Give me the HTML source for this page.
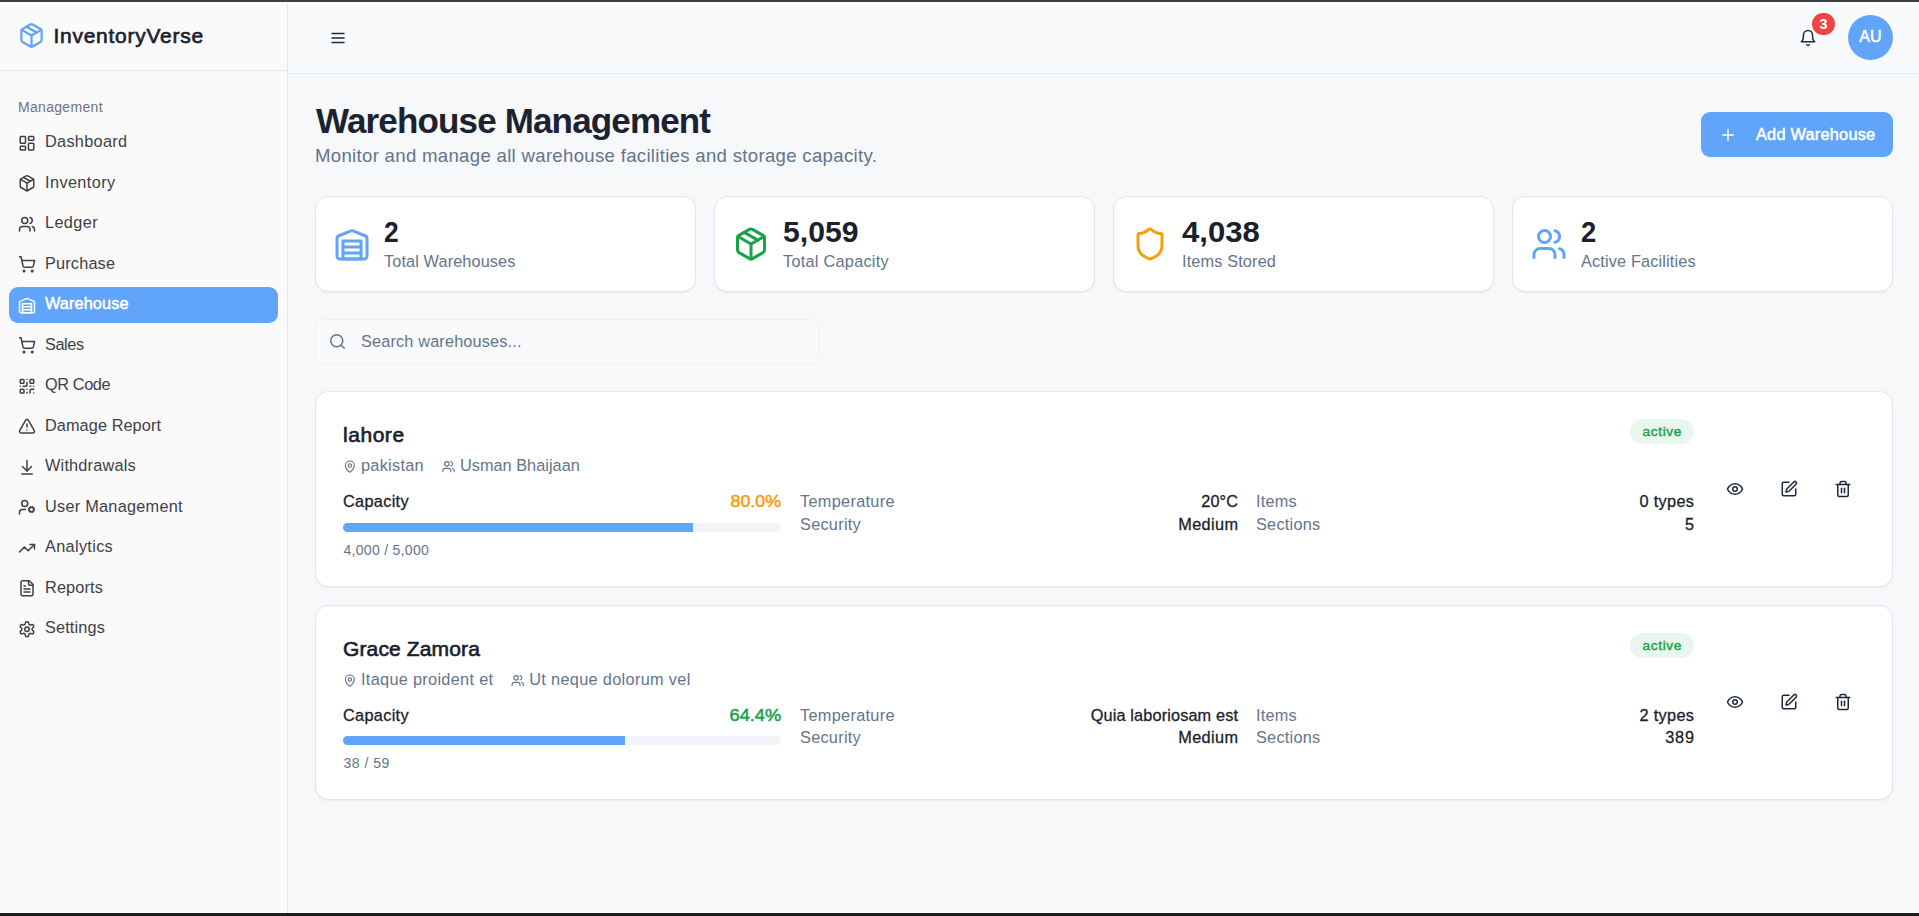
<!DOCTYPE html>
<html lang="en">
<head>
<meta charset="utf-8">
<title>InventoryVerse - Warehouse Management</title>
<style>
*{box-sizing:border-box;margin:0;padding:0}
html,body{width:1919px;height:916px;overflow:hidden;background:#fff}
body{font-family:"Liberation Sans",sans-serif;position:relative}
svg{display:block;fill:none;stroke:currentColor;stroke-linecap:round;stroke-linejoin:round}
.t{position:absolute;white-space:nowrap;font-weight:400;font-style:normal}
</style>
</head>
<body>
<div style="position:absolute;left:0;top:0;width:1919px;height:2px;background:#3f4040"></div>
<div style="position:absolute;left:0;top:913px;width:1919px;height:3px;background:#1c1c1c"></div>
<div style="position:absolute;left:0;top:3px;width:287px;height:909px;background:#fafafa"></div>
<div style="position:absolute;left:287px;top:3px;width:1px;height:910px;background:#dfe7f1"></div>
<div style="position:absolute;left:0;top:70px;width:287px;height:1px;background:#dfe7f1"></div>
<svg viewBox="0 0 24 24" style="position:absolute;left:18px;top:22px;width:27px;height:27px;color:#60a5fa;stroke-width:2"><path d="m7.5 4.27 9 5.15"/><path d="M21 8a2 2 0 0 0-1-1.73l-7-4a2 2 0 0 0-2 0l-7 4A2 2 0 0 0 3 8v8a2 2 0 0 0 1 1.73l7 4a2 2 0 0 0 2 0l7-4A2 2 0 0 0 21 16Z"/><path d="m3.3 7 8.7 5 8.7-5"/><path d="M12 22V12"/></svg>
<span class="t" id="brand" style="top:22px;font-size:21.0px;line-height:27px;color:#1a202c;left:53.5px;-webkit-text-stroke:0.63px currentColor;letter-spacing:0.731px;">InventoryVerse</span>
<span class="t" id="mgmt" style="top:97px;font-size:14.0px;line-height:20px;color:#71717a;left:18px;letter-spacing:0.311px;">Management</span>
<svg viewBox="0.000 -0.267 26.667 26.667" style="position:absolute;left:18px;top:134px;width:20px;height:20px;color:#3f3f46;stroke-width:2"><rect width="7" height="9" x="3" y="3" rx="1"/><rect width="7" height="5" x="14" y="3" rx="1"/><rect width="7" height="9" x="14" y="12" rx="1"/><rect width="7" height="5" x="3" y="16" rx="1"/></svg>
<span class="t" id="nav0" style="top:130px;font-size:16.3px;line-height:22px;color:#3f3f46;left:45px;letter-spacing:0.300px;">Dashboard</span>
<svg viewBox="0.000 -0.267 26.667 26.667" style="position:absolute;left:18px;top:174px;width:20px;height:20px;color:#3f3f46;stroke-width:2"><path d="m7.5 4.27 9 5.15"/><path d="M21 8a2 2 0 0 0-1-1.73l-7-4a2 2 0 0 0-2 0l-7 4A2 2 0 0 0 3 8v8a2 2 0 0 0 1 1.73l7 4a2 2 0 0 0 2 0l7-4A2 2 0 0 0 21 16Z"/><path d="m3.3 7 8.7 5 8.7-5"/><path d="M12 22V12"/></svg>
<span class="t" id="nav1" style="top:171px;font-size:16.3px;line-height:22px;color:#3f3f46;left:45px;letter-spacing:0.400px;">Inventory</span>
<svg viewBox="0.000 -0.267 26.667 26.667" style="position:absolute;left:18px;top:215px;width:20px;height:20px;color:#3f3f46;stroke-width:2"><path d="M16 21v-2a4 4 0 0 0-4-4H6a4 4 0 0 0-4 4v2"/><circle cx="9" cy="7" r="4"/><path d="M22 21v-2a4 4 0 0 0-3-3.87"/><path d="M16 3.13a4 4 0 0 1 0 7.75"/></svg>
<span class="t" id="nav2" style="top:211px;font-size:16.3px;line-height:22px;color:#3f3f46;left:45px;letter-spacing:0.380px;">Ledger</span>
<svg viewBox="0.000 -0.267 26.667 26.667" style="position:absolute;left:18px;top:255px;width:20px;height:20px;color:#3f3f46;stroke-width:2"><circle cx="8" cy="21" r="1"/><circle cx="19" cy="21" r="1"/><path d="M2.05 2.05h2l2.66 12.42a2 2 0 0 0 2 1.58h9.78a2 2 0 0 0 1.95-1.57l1.65-7.43H5.12"/></svg>
<span class="t" id="nav3" style="top:252px;font-size:16.3px;line-height:22px;color:#3f3f46;left:45px;letter-spacing:0.171px;">Purchase</span>
<div style="position:absolute;left:9px;top:287.0px;width:269px;height:36px;border-radius:9px;background:#60a5fa"></div>
<svg viewBox="0.000 -0.267 26.667 26.667" style="position:absolute;left:18px;top:296px;width:20px;height:20px;color:#ffffff;stroke-width:2"><path d="M22 8.35V20a2 2 0 0 1-2 2H4a2 2 0 0 1-2-2V8.35A2 2 0 0 1 3.26 6.5l8-3.2a2 2 0 0 1 1.48 0l8 3.2A2 2 0 0 1 22 8.35Z"/><path d="M6 18h12"/><path d="M6 14h12"/><rect width="12" height="12" x="6" y="10"/></svg>
<span class="t" id="nav4" style="top:292px;font-size:16.3px;line-height:22px;color:#ffffff;left:45px;-webkit-text-stroke:0.49px currentColor;letter-spacing:0.100px;">Warehouse</span>
<svg viewBox="0.000 -0.267 26.667 26.667" style="position:absolute;left:18px;top:336px;width:20px;height:20px;color:#3f3f46;stroke-width:2"><circle cx="8" cy="21" r="1"/><circle cx="19" cy="21" r="1"/><path d="M2.05 2.05h2l2.66 12.42a2 2 0 0 0 2 1.58h9.78a2 2 0 0 0 1.95-1.57l1.65-7.43H5.12"/></svg>
<span class="t" id="nav5" style="top:333px;font-size:16.3px;line-height:22px;color:#3f3f46;left:45px;letter-spacing:-0.400px;">Sales</span>
<svg viewBox="0.000 -0.267 26.667 26.667" style="position:absolute;left:18px;top:377px;width:20px;height:20px;color:#3f3f46;stroke-width:2"><rect width="5" height="5" x="3" y="3" rx="1"/><rect width="5" height="5" x="16" y="3" rx="1"/><rect width="5" height="5" x="3" y="16" rx="1"/><path d="M21 16h-3a2 2 0 0 0-2 2v3"/><path d="M21 21v.01"/><path d="M12 7v3a2 2 0 0 1-2 2H7"/><path d="M3 12h.01"/><path d="M12 3h.01"/><path d="M12 16v.01"/><path d="M16 12h1"/><path d="M21 12v.01"/><path d="M12 21v-1"/></svg>
<span class="t" id="nav6" style="top:373px;font-size:16.3px;line-height:22px;color:#3f3f46;left:45px;letter-spacing:-0.383px;">QR Code</span>
<svg viewBox="0.000 -0.267 26.667 26.667" style="position:absolute;left:18px;top:417px;width:20px;height:20px;color:#3f3f46;stroke-width:2"><path d="m21.73 18-8-14a2 2 0 0 0-3.48 0l-8 14A2 2 0 0 0 4 21h16a2 2 0 0 0 1.73-3Z"/><path d="M12 9v4"/><path d="M12 17h.01"/></svg>
<span class="t" id="nav7" style="top:414px;font-size:16.3px;line-height:22px;color:#3f3f46;left:45px;letter-spacing:0.083px;">Damage Report</span>
<svg viewBox="0.000 -0.267 26.667 26.667" style="position:absolute;left:18px;top:458px;width:20px;height:20px;color:#3f3f46;stroke-width:2"><path d="M12 17V3"/><path d="m6 11 6 6 6-6"/><path d="M19 21H5"/></svg>
<span class="t" id="nav8" style="top:454px;font-size:16.3px;line-height:22px;color:#3f3f46;left:45px;letter-spacing:0.200px;">Withdrawals</span>
<svg viewBox="0.000 -0.267 26.667 26.667" style="position:absolute;left:18px;top:498px;width:20px;height:20px;color:#3f3f46;stroke-width:2"><circle cx="18" cy="15" r="3"/><circle cx="9" cy="7" r="4"/><path d="M10 15H6a4 4 0 0 0-4 4v2"/><path d="m21.7 16.4-.9-.3"/><path d="m15.2 13.9-.9-.3"/><path d="m16.6 18.7.3-.9"/><path d="m19.1 12.2.3-.9"/><path d="m19.6 18.7-.4-1"/><path d="m16.8 12.3-.4-1"/><path d="m14.3 16.6 1-.4"/><path d="m20.7 13.8 1-.4"/></svg>
<span class="t" id="nav9" style="top:495px;font-size:16.3px;line-height:22px;color:#3f3f46;left:45px;letter-spacing:0.257px;">User Management</span>
<svg viewBox="0.000 -0.267 26.667 26.667" style="position:absolute;left:18px;top:539px;width:20px;height:20px;color:#3f3f46;stroke-width:2"><polyline points="22 7 13.5 15.5 8.5 10.5 2 17"/><polyline points="16 7 22 7 22 13"/></svg>
<span class="t" id="nav10" style="top:535px;font-size:16.3px;line-height:22px;color:#3f3f46;left:45px;letter-spacing:0.325px;">Analytics</span>
<svg viewBox="0.000 -0.267 26.667 26.667" style="position:absolute;left:18px;top:579px;width:20px;height:20px;color:#3f3f46;stroke-width:2"><path d="M15 2H6a2 2 0 0 0-2 2v16a2 2 0 0 0 2 2h12a2 2 0 0 0 2-2V7Z"/><path d="M14 2v4a2 2 0 0 0 2 2h4"/><path d="M10 9H8"/><path d="M16 13H8"/><path d="M16 17H8"/></svg>
<span class="t" id="nav11" style="top:576px;font-size:16.3px;line-height:22px;color:#3f3f46;left:45px;letter-spacing:0.133px;">Reports</span>
<svg viewBox="0.000 -0.267 26.667 26.667" style="position:absolute;left:18px;top:620px;width:20px;height:20px;color:#3f3f46;stroke-width:2"><path d="M12.22 2h-.44a2 2 0 0 0-2 2v.18a2 2 0 0 1-1 1.73l-.43.25a2 2 0 0 1-2 0l-.15-.08a2 2 0 0 0-2.73.73l-.22.38a2 2 0 0 0 .73 2.73l.15.1a2 2 0 0 1 1 1.72v.51a2 2 0 0 1-1 1.74l-.15.09a2 2 0 0 0-.73 2.73l.22.38a2 2 0 0 0 2.73.73l.15-.08a2 2 0 0 1 2 0l.43.25a2 2 0 0 1 1 1.73V20a2 2 0 0 0 2 2h.44a2 2 0 0 0 2-2v-.18a2 2 0 0 1 1-1.73l.43-.25a2 2 0 0 1 2 0l.15.08a2 2 0 0 0 2.73-.73l.22-.39a2 2 0 0 0-.73-2.73l-.15-.08a2 2 0 0 1-1-1.74v-.5a2 2 0 0 1 1-1.74l.15-.09a2 2 0 0 0 .73-2.73l-.22-.38a2 2 0 0 0-2.73-.73l-.15.08a2 2 0 0 1-2 0l-.43-.25a2 2 0 0 1-1-1.73V4a2 2 0 0 0-2-2z"/><circle cx="12" cy="12" r="3"/></svg>
<span class="t" id="nav12" style="top:616px;font-size:16.3px;line-height:22px;color:#3f3f46;left:45px;letter-spacing:0.143px;">Settings</span>
<div style="position:absolute;left:288px;top:3px;width:1631px;height:909px;background:#f6f8fa"></div>
<div style="position:absolute;left:288px;top:3px;width:1631px;height:70px;background:#f9fafb"></div>
<div style="position:absolute;left:288px;top:73px;width:1631px;height:1px;background:#dfe7f1"></div>
<svg viewBox="0 0 24 24" style="position:absolute;left:329px;top:29px;width:18px;height:18px;color:#1e293b;stroke-width:2"><line x1="4" x2="20" y1="12" y2="12"/><line x1="4" x2="20" y1="6" y2="6"/><line x1="4" x2="20" y1="18" y2="18"/></svg>
<svg viewBox="0 0 24 24" style="position:absolute;left:1799px;top:29px;width:18px;height:18px;color:#1e293b;stroke-width:2"><path d="M6 8a6 6 0 0 1 12 0c0 7 3 9 3 9H3s3-2 3-9"/><path d="M10.3 21a1.94 1.94 0 0 0 3.4 0"/></svg>
<div style="position:absolute;left:1812.25px;top:12.75px;width:22.5px;height:22.5px;border-radius:50%;background:#ef4444"></div>
<span class="t" id="bnum" style="top:14px;font-size:14.4px;line-height:20px;color:#ffffff;left:1823.5px;transform:translateX(-50%);font-weight:700;">3</span>
<div style="position:absolute;left:1848px;top:15px;width:45px;height:45px;border-radius:50%;background:#60a5fa"></div>
<span class="t" id="au" style="top:26px;font-size:16.0px;line-height:21px;color:#ffffff;left:1870.4px;transform:translateX(-50%);-webkit-text-stroke:0.48px currentColor;">AU</span>
<h1 class="t" id="title" style="top:99px;font-size:35.0px;line-height:43px;color:#1c2230;left:316px;font-weight:700;letter-spacing:-0.842px;">Warehouse Management</h1>
<p class="t" id="sub" style="top:143px;font-size:18.6px;line-height:25px;color:#64748b;left:315px;letter-spacing:0.305px;">Monitor and manage all warehouse facilities and storage capacity.</p>
<div style="position:absolute;left:1701px;top:112px;width:192px;height:45px;border-radius:9px;background:#60a5fa"></div>
<svg viewBox="0 0 24 24" style="position:absolute;left:1719px;top:126px;width:18px;height:18px;color:#ffffff;stroke-width:2"><path d="M5 12h14"/><path d="M12 5v14"/></svg>
<span class="t" id="addw" style="top:123px;font-size:16.3px;line-height:22px;color:#ffffff;left:1756px;-webkit-text-stroke:0.49px currentColor;letter-spacing:0.250px;">Add Warehouse</span>
<div style="position:absolute;left:315px;top:196px;width:381px;height:96px;background:#fff;border:1px solid #dfe7f1;border-radius:13.5px;box-shadow:0 1px 2px rgba(15,23,42,.06)"></div>
<svg viewBox="0 0 24 24" style="position:absolute;left:334px;top:226px;width:36px;height:36px;color:#60a5fa;stroke-width:2"><path d="M22 8.35V20a2 2 0 0 1-2 2H4a2 2 0 0 1-2-2V8.35A2 2 0 0 1 3.26 6.5l8-3.2a2 2 0 0 1 1.48 0l8 3.2A2 2 0 0 1 22 8.35Z"/><path d="M6 18h12"/><path d="M6 14h12"/><rect width="12" height="12" x="6" y="10"/></svg>
<span class="t" id="sn0" style="top:214px;font-size:28.8px;line-height:36px;color:#1a202c;left:384px;font-weight:700;transform:scaleX(0.9187);transform-origin:left center;">2</span>
<span class="t" id="sl0" style="top:250px;font-size:16.3px;line-height:22px;color:#64748b;left:384px;letter-spacing:0.113px;">Total Warehouses</span>
<div style="position:absolute;left:714px;top:196px;width:381px;height:96px;background:#fff;border:1px solid #dfe7f1;border-radius:13.5px;box-shadow:0 1px 2px rgba(15,23,42,.06)"></div>
<svg viewBox="0 0 24 24" style="position:absolute;left:733px;top:226px;width:36px;height:36px;color:#16a34a;stroke-width:2"><path d="m7.5 4.27 9 5.15"/><path d="M21 8a2 2 0 0 0-1-1.73l-7-4a2 2 0 0 0-2 0l-7 4A2 2 0 0 0 3 8v8a2 2 0 0 0 1 1.73l7 4a2 2 0 0 0 2 0l7-4A2 2 0 0 0 21 16Z"/><path d="m3.3 7 8.7 5 8.7-5"/><path d="M12 22V12"/></svg>
<span class="t" id="sn1" style="top:214px;font-size:28.8px;line-height:36px;color:#1a202c;left:783px;font-weight:700;transform:scaleX(1.0472);transform-origin:left center;">5,059</span>
<span class="t" id="sl1" style="top:250px;font-size:16.3px;line-height:22px;color:#64748b;left:783px;letter-spacing:0.262px;">Total Capacity</span>
<div style="position:absolute;left:1113px;top:196px;width:381px;height:96px;background:#fff;border:1px solid #dfe7f1;border-radius:13.5px;box-shadow:0 1px 2px rgba(15,23,42,.06)"></div>
<svg viewBox="0 0 24 24" style="position:absolute;left:1132px;top:226px;width:36px;height:36px;color:#f59e0b;stroke-width:2"><path d="M20 13c0 5-3.5 7.5-7.66 8.95a1 1 0 0 1-.67-.01C7.5 20.5 4 18 4 13V6a1 1 0 0 1 1-1c2 0 4.5-1.2 6.24-2.72a1.17 1.17 0 0 1 1.52 0C14.51 3.81 17 5 19 5a1 1 0 0 1 1 1z"/></svg>
<span class="t" id="sn2" style="top:214px;font-size:28.8px;line-height:36px;color:#1a202c;left:1182px;font-weight:700;transform:scaleX(1.0792);transform-origin:left center;">4,038</span>
<span class="t" id="sl2" style="top:250px;font-size:16.3px;line-height:22px;color:#64748b;left:1182px;letter-spacing:0.145px;">Items Stored</span>
<div style="position:absolute;left:1512px;top:196px;width:381px;height:96px;background:#fff;border:1px solid #dfe7f1;border-radius:13.5px;box-shadow:0 1px 2px rgba(15,23,42,.06)"></div>
<svg viewBox="0 0 24 24" style="position:absolute;left:1531px;top:226px;width:36px;height:36px;color:#60a5fa;stroke-width:2"><path d="M16 21v-2a4 4 0 0 0-4-4H6a4 4 0 0 0-4 4v2"/><circle cx="9" cy="7" r="4"/><path d="M22 21v-2a4 4 0 0 0-3-3.87"/><path d="M16 3.13a4 4 0 0 1 0 7.75"/></svg>
<span class="t" id="sn3" style="top:214px;font-size:28.8px;line-height:36px;color:#1a202c;left:1581px;font-weight:700;transform:scaleX(0.9500);transform-origin:left center;">2</span>
<span class="t" id="sl3" style="top:250px;font-size:16.3px;line-height:22px;color:#64748b;left:1581px;letter-spacing:0.150px;">Active Facilities</span>
<div style="position:absolute;left:315px;top:319px;width:504px;height:45px;border-radius:9px;background:#f8fafc;border:1px solid #edf1f6"></div>
<svg viewBox="-0.667 -0.667 26.667 26.667" style="position:absolute;left:328px;top:332px;width:20px;height:20px;color:#64748b;stroke-width:2"><circle cx="11" cy="11" r="8"/><path d="m21 21-4.3-4.3"/></svg>
<span class="t" id="srch" style="top:330px;font-size:16.3px;line-height:22px;color:#64748b;left:361px;letter-spacing:0.158px;">Search warehouses...</span>
<div style="position:absolute;left:315px;top:391px;width:1578px;height:196px;background:#fff;border:1px solid #dfe7f1;border-radius:13.5px;box-shadow:0 1px 2px rgba(15,23,42,.06)"></div>
<span class="t" id="aname" style="top:421px;font-size:21.0px;line-height:27px;color:#1a202c;left:343px;-webkit-text-stroke:0.63px currentColor;letter-spacing:0.540px;">lahore</span>
<svg viewBox="-0.178 -1.600 28.444 28.444" style="position:absolute;left:343px;top:459px;width:16px;height:16px;color:#64748b;stroke-width:2"><path d="M20 10c0 6-8 12-8 12s-8-6-8-12a8 8 0 0 1 16 0Z"/><circle cx="12" cy="10" r="3"/></svg>
<span class="t" id="aloc" style="top:454px;font-size:16.3px;line-height:22px;color:#64748b;left:361px;letter-spacing:0.286px;">pakistan</span>
<svg viewBox="-1.422 -1.600 28.444 28.444" style="position:absolute;left:441px;top:459px;width:16px;height:16px;color:#64748b;stroke-width:2"><path d="M16 21v-2a4 4 0 0 0-4-4H6a4 4 0 0 0-4 4v2"/><circle cx="9" cy="7" r="4"/><path d="M22 21v-2a4 4 0 0 0-3-3.87"/><path d="M16 3.13a4 4 0 0 1 0 7.75"/></svg>
<span class="t" id="amgr" style="top:454px;font-size:16.3px;line-height:22px;color:#64748b;left:460.0px;letter-spacing:0.023px;">Usman Bhaijaan</span>
<div style="position:absolute;left:1630px;top:419px;width:64px;height:25px;border-radius:12.5px;background:#e8f6ed"></div>
<span class="t" id="aact" style="top:422px;font-size:13.7px;line-height:19px;color:#16a34a;left:1662.3px;transform:translateX(-50%);-webkit-text-stroke:0.41px currentColor;letter-spacing:0.640px;">active</span>
<span class="t" id="acapl" style="top:490px;font-size:16.3px;line-height:22px;color:#1a202c;left:343px;-webkit-text-stroke:0.28px currentColor;letter-spacing:0.314px;">Capacity</span>
<span class="t" id="apct" style="top:490px;font-size:16.3px;line-height:22px;color:#f59e0b;right:1138px;-webkit-text-stroke:0.49px currentColor;transform:scaleX(1.0978);transform-origin:right center;">80.0%</span>
<div style="position:absolute;left:343px;top:523px;width:438px;height:9px;border-radius:4.5px;background:#f1f5f9;overflow:hidden"><div style="width:350px;height:9px;background:#60a5fa"></div></div>
<span class="t" id="acap" style="top:540px;font-size:14.0px;line-height:20px;color:#64748b;left:343.5px;letter-spacing:0.292px;">4,000 / 5,000</span>
<span class="t" id="atl" style="top:490px;font-size:16.3px;line-height:22px;color:#64748b;left:800px;letter-spacing:0.310px;">Temperature</span>
<span class="t" id="atv" style="top:490px;font-size:16.3px;line-height:22px;color:#1a202c;right:681px;-webkit-text-stroke:0.28px currentColor;letter-spacing:0.133px;margin-right:-0.133px;">20°C</span>
<span class="t" id="asl" style="top:513px;font-size:16.3px;line-height:22px;color:#64748b;left:800px;letter-spacing:0.271px;">Security</span>
<span class="t" id="asv" style="top:513px;font-size:16.3px;line-height:22px;color:#1a202c;right:681px;-webkit-text-stroke:0.28px currentColor;letter-spacing:0.380px;margin-right:-0.380px;">Medium</span>
<span class="t" id="ail" style="top:490px;font-size:16.3px;line-height:22px;color:#64748b;left:1256px;letter-spacing:0.200px;">Items</span>
<span class="t" id="aiv" style="top:490px;font-size:16.3px;line-height:22px;color:#1a202c;right:225px;-webkit-text-stroke:0.28px currentColor;letter-spacing:0.333px;margin-right:-0.333px;">0 types</span>
<span class="t" id="axl" style="top:513px;font-size:16.3px;line-height:22px;color:#64748b;left:1256px;letter-spacing:0.243px;">Sections</span>
<span class="t" id="axv" style="top:513px;font-size:16.3px;line-height:22px;color:#1a202c;right:225px;-webkit-text-stroke:0.28px currentColor;letter-spacing:0.000px;margin-right:0.000px;">5</span>
<svg viewBox="0 0 24 24" style="position:absolute;left:1726px;top:480px;width:18px;height:18px;color:#1e293b;stroke-width:2"><path d="M2 12s3-7 10-7 10 7 10 7-3 7-10 7-10-7-10-7Z"/><circle cx="12" cy="12" r="3"/></svg>
<svg viewBox="0 0 24 24" style="position:absolute;left:1780px;top:480px;width:18px;height:18px;color:#1e293b;stroke-width:2"><path d="M12 3H5a2 2 0 0 0-2 2v14a2 2 0 0 0 2 2h14a2 2 0 0 0 2-2v-7"/><path d="M18.375 2.625a1 1 0 0 1 3 3l-9.013 9.014a2 2 0 0 1-.853.505l-2.873.84a.5.5 0 0 1-.62-.62l.84-2.873a2 2 0 0 1 .506-.852z"/></svg>
<svg viewBox="0 0 24 24" style="position:absolute;left:1834px;top:480px;width:18px;height:18px;color:#1e293b;stroke-width:2"><path d="M3 6h18"/><path d="M19 6v14c0 1-1 2-2 2H7c-1 0-2-1-2-2V6"/><path d="M8 6V4c0-1 1-2 2-2h4c1 0 2 1 2 2v2"/><line x1="10" x2="10" y1="11" y2="17"/><line x1="14" x2="14" y1="11" y2="17"/></svg>
<div style="position:absolute;left:315px;top:605px;width:1578px;height:195px;background:#fff;border:1px solid #dfe7f1;border-radius:13.5px;box-shadow:0 1px 2px rgba(15,23,42,.06)"></div>
<span class="t" id="bname" style="top:635px;font-size:21.0px;line-height:27px;color:#1a202c;left:343px;-webkit-text-stroke:0.63px currentColor;letter-spacing:0.136px;">Grace Zamora</span>
<svg viewBox="-0.178 -1.600 28.444 28.444" style="position:absolute;left:343px;top:673px;width:16px;height:16px;color:#64748b;stroke-width:2"><path d="M20 10c0 6-8 12-8 12s-8-6-8-12a8 8 0 0 1 16 0Z"/><circle cx="12" cy="10" r="3"/></svg>
<span class="t" id="bloc" style="top:668px;font-size:16.3px;line-height:22px;color:#64748b;left:361px;letter-spacing:0.312px;">Itaque proident et</span>
<svg viewBox="-0.000 -1.600 28.444 28.444" style="position:absolute;left:511px;top:673px;width:16px;height:16px;color:#64748b;stroke-width:2"><path d="M16 21v-2a4 4 0 0 0-4-4H6a4 4 0 0 0-4 4v2"/><circle cx="9" cy="7" r="4"/><path d="M22 21v-2a4 4 0 0 0-3-3.87"/><path d="M16 3.13a4 4 0 0 1 0 7.75"/></svg>
<span class="t" id="bmgr" style="top:668px;font-size:16.3px;line-height:22px;color:#64748b;left:529.2px;letter-spacing:0.337px;">Ut neque dolorum vel</span>
<div style="position:absolute;left:1630px;top:633px;width:64px;height:25px;border-radius:12.5px;background:#e8f6ed"></div>
<span class="t" id="bact" style="top:636px;font-size:13.7px;line-height:19px;color:#16a34a;left:1662.3px;transform:translateX(-50%);-webkit-text-stroke:0.41px currentColor;letter-spacing:0.640px;">active</span>
<span class="t" id="bcapl" style="top:704px;font-size:16.3px;line-height:22px;color:#1a202c;left:343px;-webkit-text-stroke:0.28px currentColor;letter-spacing:0.314px;">Capacity</span>
<span class="t" id="bpct" style="top:704px;font-size:16.3px;line-height:22px;color:#16a34a;right:1138px;-webkit-text-stroke:0.49px currentColor;transform:scaleX(1.1174);transform-origin:right center;">64.4%</span>
<div style="position:absolute;left:343px;top:736px;width:438px;height:9px;border-radius:4.5px;background:#f1f5f9;overflow:hidden"><div style="width:282px;height:9px;background:#60a5fa"></div></div>
<span class="t" id="bcap" style="top:753px;font-size:14.0px;line-height:20px;color:#64748b;left:343.5px;letter-spacing:0.483px;">38 / 59</span>
<span class="t" id="btl" style="top:704px;font-size:16.3px;line-height:22px;color:#64748b;left:800px;letter-spacing:0.310px;">Temperature</span>
<span class="t" id="btv" style="top:704px;font-size:16.3px;line-height:22px;color:#1a202c;right:681px;-webkit-text-stroke:0.28px currentColor;letter-spacing:0.139px;margin-right:-0.139px;">Quia laboriosam est</span>
<span class="t" id="bsl" style="top:726px;font-size:16.3px;line-height:22px;color:#64748b;left:800px;letter-spacing:0.271px;">Security</span>
<span class="t" id="bsv" style="top:726px;font-size:16.3px;line-height:22px;color:#1a202c;right:681px;-webkit-text-stroke:0.28px currentColor;letter-spacing:0.380px;margin-right:-0.380px;">Medium</span>
<span class="t" id="bil" style="top:704px;font-size:16.3px;line-height:22px;color:#64748b;left:1256px;letter-spacing:0.200px;">Items</span>
<span class="t" id="biv" style="top:704px;font-size:16.3px;line-height:22px;color:#1a202c;right:225px;-webkit-text-stroke:0.28px currentColor;letter-spacing:0.333px;margin-right:-0.333px;">2 types</span>
<span class="t" id="bxl" style="top:726px;font-size:16.3px;line-height:22px;color:#64748b;left:1256px;letter-spacing:0.243px;">Sections</span>
<span class="t" id="bxv" style="top:726px;font-size:16.3px;line-height:22px;color:#1a202c;right:225px;-webkit-text-stroke:0.28px currentColor;letter-spacing:0.850px;margin-right:-0.850px;">389</span>
<svg viewBox="0 0 24 24" style="position:absolute;left:1726px;top:693px;width:18px;height:18px;color:#1e293b;stroke-width:2"><path d="M2 12s3-7 10-7 10 7 10 7-3 7-10 7-10-7-10-7Z"/><circle cx="12" cy="12" r="3"/></svg>
<svg viewBox="0 0 24 24" style="position:absolute;left:1780px;top:693px;width:18px;height:18px;color:#1e293b;stroke-width:2"><path d="M12 3H5a2 2 0 0 0-2 2v14a2 2 0 0 0 2 2h14a2 2 0 0 0 2-2v-7"/><path d="M18.375 2.625a1 1 0 0 1 3 3l-9.013 9.014a2 2 0 0 1-.853.505l-2.873.84a.5.5 0 0 1-.62-.62l.84-2.873a2 2 0 0 1 .506-.852z"/></svg>
<svg viewBox="0 0 24 24" style="position:absolute;left:1834px;top:693px;width:18px;height:18px;color:#1e293b;stroke-width:2"><path d="M3 6h18"/><path d="M19 6v14c0 1-1 2-2 2H7c-1 0-2-1-2-2V6"/><path d="M8 6V4c0-1 1-2 2-2h4c1 0 2 1 2 2v2"/><line x1="10" x2="10" y1="11" y2="17"/><line x1="14" x2="14" y1="11" y2="17"/></svg>
</body>
</html>
